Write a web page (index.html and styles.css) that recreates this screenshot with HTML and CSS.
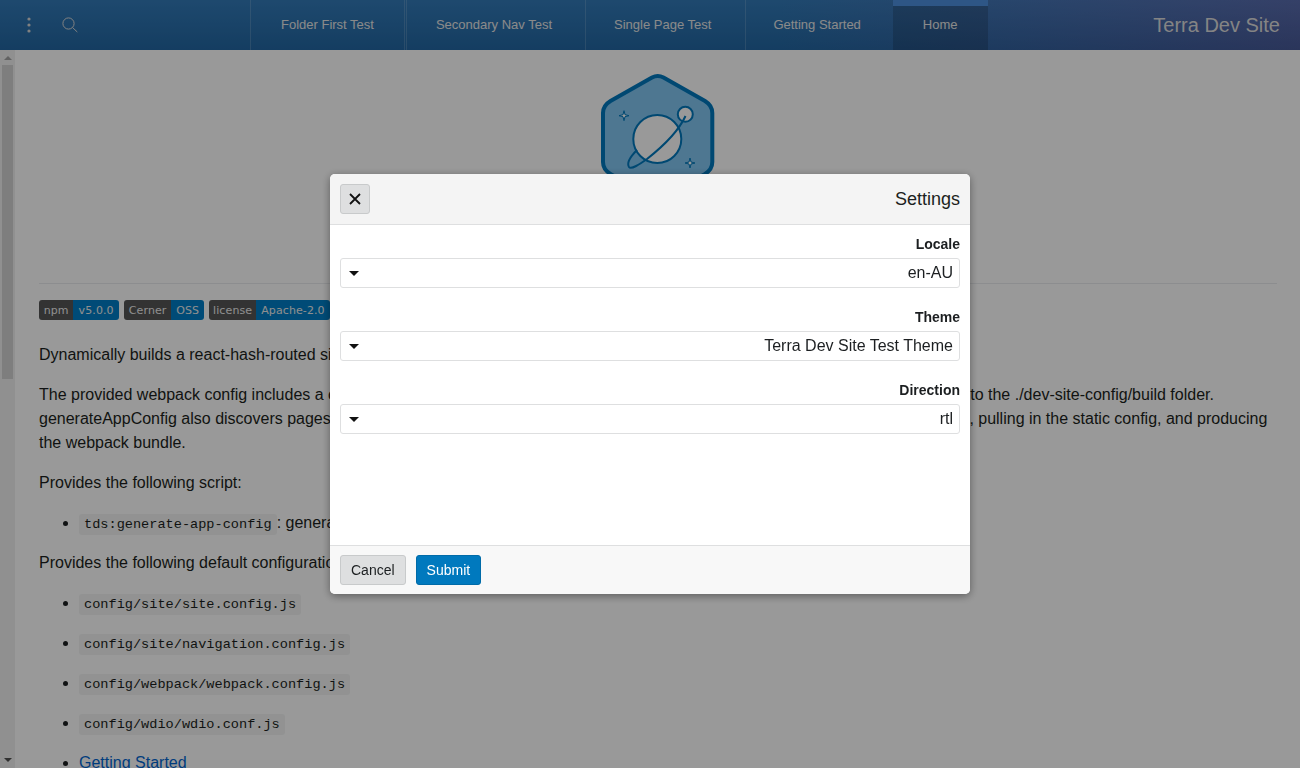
FILE: index.html
```html
<!DOCTYPE html>
<html lang="en">
<head>
<meta charset="utf-8">
<title>Terra Dev Site</title>
<link rel="stylesheet" href="styles.css">
</head>
<body>
<div class="app">
  <header class="topbar">
    <div class="tools">
      <svg class="kebab" width="4" height="16" viewBox="0 0 4 16"><circle cx="2" cy="2" r="1.6"/><circle cx="2" cy="8" r="1.6"/><circle cx="2" cy="14" r="1.6"/></svg>
      <svg class="search" width="16" height="16" viewBox="0 0 16 16"><circle cx="6.5" cy="6.5" r="5.6"/><path d="M10.6 10.6 15.3 15"/></svg>
    </div>
    <nav class="nav">
      <a class="nav-item nav-folder">Folder First Test</a>
      <a class="nav-item nav-secondary">Secondary Nav Test</a>
      <a class="nav-item nav-single">Single Page Test</a>
      <a class="nav-item nav-started">Getting Started</a>
      <a class="nav-item nav-active">Home</a>
    </nav>
    <div class="site-title">Terra Dev Site</div>
  </header>
  <div class="body-row">
    <div class="scrollbar">
      <div class="arrow-up"></div>
      <div class="track"><div class="thumb"></div></div>
      <div class="arrow-down"></div>
    </div>
    <main class="content">
      <div class="logo-wrap">
        <svg class="logo" width="116" height="135" viewBox="0 0 116 135">
          <path class="logo-hex" d="M52 5.500 Q57.700 2.500 63.500 5.500 L105 29 Q112.300 33.500 112.300 41 L112.300 90 Q112.300 97.500 105 102 L63.500 126 Q57.700 129 52 126 L10.500 102 Q3 97.500 3 90 L3 41 Q3 33.500 10.500 29Z"/>
          <circle class="logo-line" cx="57.300" cy="67" r="24"/>
          <circle class="logo-line" cx="85.300" cy="42.300" r="7.500"/>
          <path class="logo-ring" d="M85.500 44 C80 56 66 72 47 87 C40 92 31 98 29 95 C26.500 91 31 84 37 78"/>
          <path class="logo-star" d="M24 38.700 L25 42.700 L29 43.700 L25 44.700 L24 48.700 L23 44.700 L19 43.700 L23 42.700Z"/>
          <path class="logo-star" d="M90 86 L91 90 L95 91 L91 92 L90 96 L89 92 L85 91 L89 90Z"/>
        </svg>
      </div>
      <hr class="rule">
      <div class="badges">
        <span class="badge badge-npm"><span class="badge-l">npm</span><span class="badge-r">v5.0.0</span></span>
        <span class="badge badge-cerner"><span class="badge-l">Cerner</span><span class="badge-r">OSS</span></span>
        <span class="badge badge-license"><span class="badge-l">license</span><span class="badge-r">Apache-2.0</span></span>
      </div>
      <p>Dynamically builds a react-hash-routed site based on the provided site configuration.</p>
      <p>The provided webpack config includes a custom generateAppConfig plugin which generates the application config then writes it out to the ./dev-site-config/build folder. generateAppConfig also discovers pages and generates the navigation by loading the site config, resolving its pages and resources, pulling in the static config, and producing the webpack bundle.</p>
      <p>Provides the following script:</p>
      <ul>
        <li><code>tds:generate-app-config</code>: generates the application config.</li>
      </ul>
      <p>Provides the following default configurations:</p>
      <ul>
        <li><code>config/site/site.config.js</code></li>
        <li><code>config/site/navigation.config.js</code></li>
        <li><code>config/webpack/webpack.config.js</code></li>
        <li><code>config/wdio/wdio.conf.js</code></li>
        <li><a class="link">Getting Started</a></li>
      </ul>
    </main>
  </div>
</div>
<div class="overlay"></div>
<section class="modal" dir="rtl">
  <header class="modal-head">
    <h1 class="modal-title">Settings</h1>
    <button class="close" aria-label="Close"><svg width="12" height="12" viewBox="0 0 12 12"><path d="M1 1 11 11M11 1 1 11"/></svg></button>
  </header>
  <div class="modal-body">
    <div class="field">
      <label class="field-label">Locale</label>
      <div class="select"><span>en-AU</span><i class="caret"></i></div>
    </div>
    <div class="field">
      <label class="field-label">Theme</label>
      <div class="select"><span>Terra Dev Site Test Theme</span><i class="caret"></i></div>
    </div>
    <div class="field">
      <label class="field-label">Direction</label>
      <div class="select"><span>rtl</span><i class="caret"></i></div>
    </div>
  </div>
  <footer class="modal-foot">
    <button class="btn btn-primary">Submit</button>
    <button class="btn">Cancel</button>
  </footer>
</section>
</body>
</html>
```
FILE: styles.css
```css
* { box-sizing: border-box; }
html, body { margin: 0; height: 100%; overflow: hidden; }
body { font-family: "Liberation Sans", Arial, sans-serif; font-size: 16px; line-height: 24px; color: #1c1f21; background: #fff; }
.app { height: 768px; display: flex; flex-direction: column; }
.topbar { height: 50px; flex: none; display: flex; background: linear-gradient(to bottom, rgba(255,255,255,.06), rgba(0,0,0,.1)), linear-gradient(to right, #2672b4 0%, #2672b4 60%, #4f63a8 100%); color: #fff; }
.tools { width: 250px; flex: none; display: flex; align-items: center; padding-left: 27px; gap: 31px; }
.kebab { fill: #d8d8d8; }
.search { fill: none; stroke: #d8d8d8; stroke-width: 1; }
.nav { display: flex; }
.nav-item { display: flex; align-items: center; font-size: 13px; color: #e6e6e6; border-left: 1px solid rgba(255,255,255,.16); }
.nav-folder { padding: 0 30px; border-right: 1px solid rgba(255,255,255,.16); margin-right: 1px; }
.nav-secondary { padding: 0 33px 0 29px; }
.nav-single { padding: 0 34px 0 28px; }
.nav-started { padding: 0 32px 0 27px; }
.nav-active { padding: 0 30px 6px; background: rgba(0,0,0,.16); border-top: 6px solid #4d8fe0; border-left: 0; }
.site-title { margin-left: auto; padding-right: 20px; font-size: 20px; line-height: 50px; color: #ddd; }
.body-row { flex: 1; min-height: 0; display: flex; }
.scrollbar { width: 15px; flex: none; background: #f1f1f1; display: flex; flex-direction: column; align-items: center; }
.arrow-up { margin-top: 6px; width: 0; height: 0; border: 4px solid transparent; border-top: 0; border-bottom: 4px solid #a3a3a3; margin-bottom: 5px; }
.track { flex: 1; width: 100%; padding: 0 2px; }
.thumb { height: 314px; background: #d2d2d2; }
.arrow-down { margin: 6px 0; width: 0; height: 0; border: 4px solid transparent; border-bottom: 0; border-top: 4px solid #505050; }
.content { flex: 1; min-width: 0; overflow: hidden; padding: 0 23px 0 24px; }
.logo-wrap { height: 233px; display: flex; justify-content: center; padding-top: 22px; }
.logo-hex { fill: #82c6f2; stroke: #0079be; stroke-width: 4; }
.logo-line { fill: #fff; stroke: #0079be; stroke-width: 2; }
.logo-ring { fill: none; stroke: #0079be; stroke-width: 2; }
.logo-star { fill: #fff; stroke: #0079be; stroke-width: 1; }
.rule { margin: 0 0 16px; border: 0; border-top: 1px solid #eaecef; }
.badges { display: flex; gap: 5px; height: 20px; margin-bottom: 23px; }
.badge { display: flex; font-family: "DejaVu Sans", sans-serif; font-size: 11px; line-height: 21px; letter-spacing: .1px; color: #eee; border-radius: 3px; overflow: hidden; text-align: center; }
.badge-l { background: #555; }
.badge-r { background: #007ec6; }
.badge-npm .badge-l { width: 34.300px; }
.badge-npm .badge-r { width: 45.700px; }
.badge-cerner .badge-l { width: 47.300px; }
.badge-cerner .badge-r { width: 32.700px; }
.badge-license .badge-l { width: 47.300px; }
.badge-license .badge-r { width: 73.400px; }
p { margin: 0 0 16px; }
ul { margin: 0 0 16px; padding-left: 40px; }
li { margin-bottom: 16px; }
li:last-child { margin-bottom: 0; }
code { font-family: "Liberation Mono", monospace; font-size: 13.6px; line-height: 1; background: rgba(27,31,35,.05); padding: 3px 5px; border-radius: 3px; }
.link { color: #0065d1; }
.overlay { position: fixed; inset: 0; background: rgba(0,0,0,.4); }
.modal { position: fixed; left: 330px; top: 174px; width: 640px; height: 420px; background: #fff; border-radius: 5px; box-shadow: 0 2px 8px rgba(0,0,0,.4); display: flex; flex-direction: column; overflow: hidden; }
.modal-head { height: 51px; flex: none; display: flex; justify-content: space-between; align-items: center; padding: 0 10px; background: #f4f4f4; border-bottom: 1px solid #dedfe0; }
.modal-title { margin: 0; font-size: 18px; font-weight: 400; line-height: 24px; color: #1c1f21; }
.close { width: 30px; height: 30px; padding: 0; display: flex; align-items: center; justify-content: center; background: #dedfe0; border: 1px solid #c8cacb; border-radius: 3px; }
.close path { stroke: #111; stroke-width: 1.800; fill: none; }
.modal-body { flex: 1; padding: 10px 10px 0; }
.field { margin-bottom: 20px; }
.field-label { display: block; font-size: 14px; font-weight: 700; line-height: 18px; margin-bottom: 5px; color: #1c1f21; }
.select { height: 30px; display: flex; justify-content: space-between; align-items: center; padding: 0 6px 0 8px; border: 1px solid #dedfe0; border-radius: 3px; background: #fff; }
.caret { width: 0; height: 0; border: 5px solid transparent; border-bottom: 0; border-top: 5px solid #111; }
.modal-foot { height: 49px; flex: none; display: flex; gap: 10px; align-items: center; padding: 0 10px; background: #f8f8f8; border-top: 1px solid #dedfe0; justify-content: flex-end; direction: ltr; flex-direction: row-reverse; }
.btn { height: 30px; padding: 0 10px; font: 14px/1 "Liberation Sans", Arial, sans-serif; color: #1c1f21; background: #dedfe0; border: 1px solid #c8cacb; border-radius: 3px; }
.btn-primary { background: #0079be; border-color: #006ba8; color: #fff; }
```
